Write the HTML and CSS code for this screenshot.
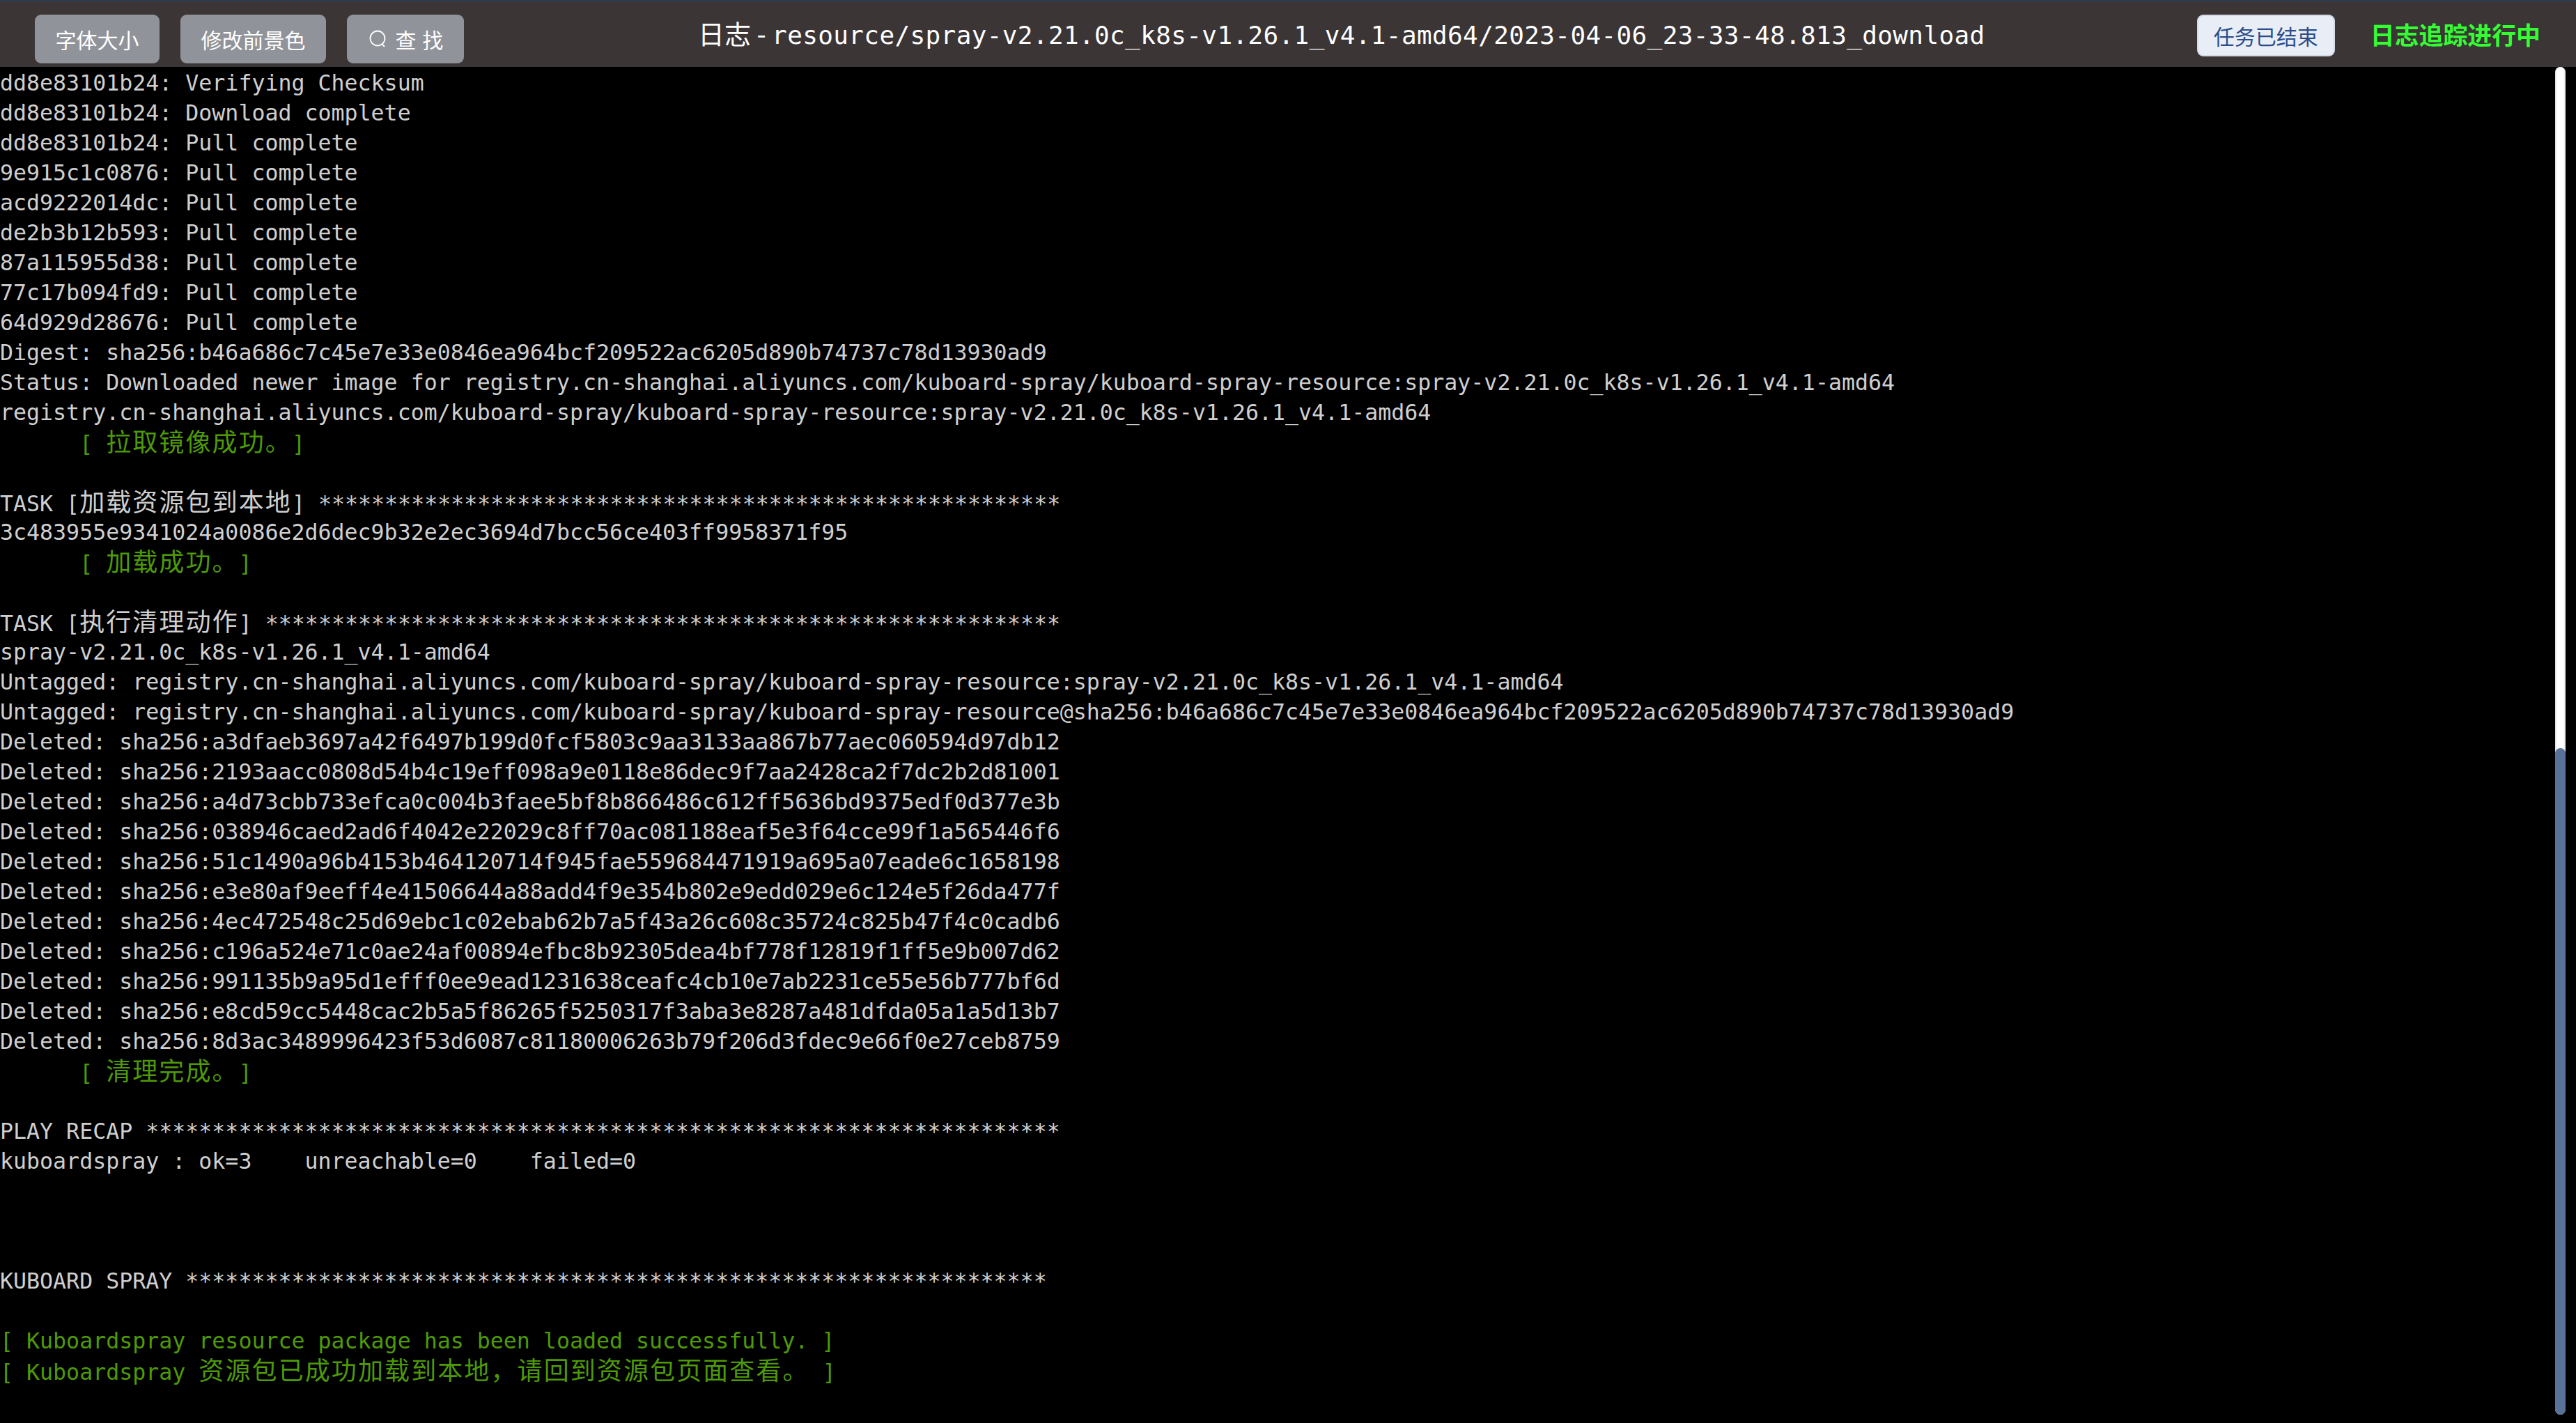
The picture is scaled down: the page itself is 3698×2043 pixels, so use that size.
FILE: index.html
```html
<!DOCTYPE html>
<html lang="zh">
<head>
<meta charset="utf-8">
<title>日志</title>
<link rel="stylesheet" href="styles.css">
</head>
<body>
<header class="bar">
  <div class="tools">
    <button class="tool">字体大小</button>
    <button class="tool">修改前景色</button>
    <button class="tool"><svg class="ico" viewBox="0 0 26 26"><circle cx="12" cy="12" r="10.5"/><path d="M18 20l4 4"/></svg><span class="find">查 找</span></button>
  </div>
  <div class="title">日志 - <span class="path">resource/spray-v2.21.0c_k8s-v1.26.1_v4.1-amd64/2023-04-06_23-33-48.813_download</span></div>
  <div class="status">
    <button class="done">任务已结束</button>
    <span class="tracking">日志追踪进行中</span>
  </div>
</header>
<main class="term">
  <div class="log">
    <div class="ln">dd8e83101b24: Verifying Checksum</div>
    <div class="ln">dd8e83101b24: Download complete</div>
    <div class="ln">dd8e83101b24: Pull complete</div>
    <div class="ln">9e915c1c0876: Pull complete</div>
    <div class="ln">acd9222014dc: Pull complete</div>
    <div class="ln">de2b3b12b593: Pull complete</div>
    <div class="ln">87a115955d38: Pull complete</div>
    <div class="ln">77c17b094fd9: Pull complete</div>
    <div class="ln">64d929d28676: Pull complete</div>
    <div class="ln">Digest: sha256:b46a686c7c45e7e33e0846ea964bcf209522ac6205d890b74737c78d13930ad9</div>
    <div class="ln">Status: Downloaded newer image for registry.cn-shanghai.aliyuncs.com/kuboard-spray/kuboard-spray-resource:spray-v2.21.0c_k8s-v1.26.1_v4.1-amd64</div>
    <div class="ln">registry.cn-shanghai.aliyuncs.com/kuboard-spray/kuboard-spray-resource:spray-v2.21.0c_k8s-v1.26.1_v4.1-amd64</div>
    <div class="ln ok">      [ <span class="cjk">拉取镜像成功。</span>]</div>
    <div class="ln"></div>
    <div class="ln">TASK [<span class="cjk">加载资源包到本地</span>] ********************************************************</div>
    <div class="ln">3c483955e9341024a0086e2d6dec9b32e2ec3694d7bcc56ce403ff9958371f95</div>
    <div class="ln ok">      [ <span class="cjk">加载成功。</span>]</div>
    <div class="ln"></div>
    <div class="ln">TASK [<span class="cjk">执行清理动作</span>] ************************************************************</div>
    <div class="ln">spray-v2.21.0c_k8s-v1.26.1_v4.1-amd64</div>
    <div class="ln">Untagged: registry.cn-shanghai.aliyuncs.com/kuboard-spray/kuboard-spray-resource:spray-v2.21.0c_k8s-v1.26.1_v4.1-amd64</div>
    <div class="ln">Untagged: registry.cn-shanghai.aliyuncs.com/kuboard-spray/kuboard-spray-resource@sha256:b46a686c7c45e7e33e0846ea964bcf209522ac6205d890b74737c78d13930ad9</div>
    <div class="ln">Deleted: sha256:a3dfaeb3697a42f6497b199d0fcf5803c9aa3133aa867b77aec060594d97db12</div>
    <div class="ln">Deleted: sha256:2193aacc0808d54b4c19eff098a9e0118e86dec9f7aa2428ca2f7dc2b2d81001</div>
    <div class="ln">Deleted: sha256:a4d73cbb733efca0c004b3faee5bf8b866486c612ff5636bd9375edf0d377e3b</div>
    <div class="ln">Deleted: sha256:038946caed2ad6f4042e22029c8ff70ac081188eaf5e3f64cce99f1a565446f6</div>
    <div class="ln">Deleted: sha256:51c1490a96b4153b464120714f945fae559684471919a695a07eade6c1658198</div>
    <div class="ln">Deleted: sha256:e3e80af9eeff4e41506644a88add4f9e354b802e9edd029e6c124e5f26da477f</div>
    <div class="ln">Deleted: sha256:4ec472548c25d69ebc1c02ebab62b7a5f43a26c608c35724c825b47f4c0cadb6</div>
    <div class="ln">Deleted: sha256:c196a524e71c0ae24af00894efbc8b92305dea4bf778f12819f1ff5e9b007d62</div>
    <div class="ln">Deleted: sha256:991135b9a95d1efff0ee9ead1231638ceafc4cb10e7ab2231ce55e56b777bf6d</div>
    <div class="ln">Deleted: sha256:e8cd59cc5448cac2b5a5f86265f5250317f3aba3e8287a481dfda05a1a5d13b7</div>
    <div class="ln">Deleted: sha256:8d3ac3489996423f53d6087c81180006263b79f206d3fdec9e66f0e27ceb8759</div>
    <div class="ln ok">      [ <span class="cjk">清理完成。</span>]</div>
    <div class="ln"></div>
    <div class="ln">PLAY RECAP *********************************************************************</div>
    <div class="ln">kuboardspray : ok=3    unreachable=0    failed=0</div>
    <div class="ln"></div>
    <div class="ln"></div>
    <div class="ln"></div>
    <div class="ln">KUBOARD SPRAY *****************************************************************</div>
    <div class="ln"></div>
    <div class="ln ok">[ Kuboardspray resource package has been loaded successfully. ]</div>
    <div class="ln ok">[ Kuboardspray <span class="cjk">资源包已成功加载到本地，请回到资源包页面查看。</span> ]</div>
  </div>
  <div class="track"><div class="thumb"></div></div>
</main>
</body>
</html>
```
FILE: styles.css
```css
html, body { margin: 0; height: 100%; background: #000; overflow: hidden; }
body { display: flex; flex-direction: column; font-family: "Noto Sans CJK SC", "Noto Sans", sans-serif; }
.bar { display: flex; align-items: flex-start; height: 94px; border-top: 2px solid #2d3a52; background: #3b3536; flex: none; }
.tools { display: flex; gap: 30px; padding: 19px 0 0 50px; flex: none; }
.tool { display: flex; align-items: center; justify-content: center; height: 70px; padding: 0 29.5px; border: 0; border-radius: 9px; background: #909399; color: #fff; font: 30px/1 "Noto Sans CJK SC", sans-serif; }
.ico { width: 26px; height: 26px; margin: 0 12px 0 2px; fill: none; stroke: #fff; stroke-width: 1.8; }
.find { word-spacing: 2px; }
.title { flex: 1; text-align: center; padding: 15px 0 0 32px; color: #fff; font-size: 38px; line-height: 60px; white-space: pre; }
.path { font-family: "DejaVu Sans Mono", monospace; font-size: 36px; letter-spacing: .37px; }
.status { display: flex; align-items: flex-start; gap: 51px; padding: 19px 51px 0 0; flex: none; }
.done { height: 60px; width: 198px; padding: 0; border: 2px solid #d5d9e4; border-radius: 9px; background: #e9edf5; color: #2b4e8a; font: 30px/1 "Noto Sans CJK SC", sans-serif; }
.tracking { color: #33ff33; font-size: 34.9px; font-weight: 700; line-height: 56px; }
.term { position: relative; flex: 1; background: #000; overflow: hidden; }
.log { padding-top: 2px; font-family: "DejaVu Sans Mono", monospace; font-size: 31.6px; color: #cfcfcf; }
.ln { height: 43px; line-height: 43px; white-space: pre; }
.ok { color: #4e9a06; }
.cjk { font-family: "Noto Sans CJK SC", sans-serif; font-size: 36px; line-height: 1; letter-spacing: 2.1px; text-spacing-trim: space-all; }
.track { position: absolute; top: 0; bottom: 12px; left: 3668px; width: 15px; border-radius: 8px; background: linear-gradient(90deg, #ddd, #fff 20%, #fff 80%, #ddd); }
.thumb { position: absolute; left: 0; right: 0; top: 978px; bottom: 0; border-radius: 8px; background: #5a7299; }
```
